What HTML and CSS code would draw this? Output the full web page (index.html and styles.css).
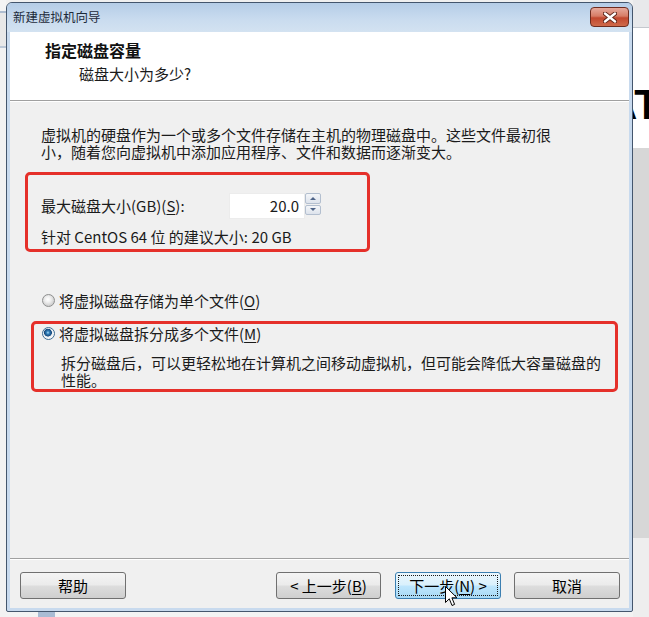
FILE: index.html
```html
<!DOCTYPE html>
<html lang="zh-CN">
<head>
    <title>新建虚拟机向导</title>
    <meta charset="utf-8">
    <link rel="stylesheet" href="styles.css">
</head>
<body>
<div class="desktop">
    <div class="side-left"></div>

    <div class="window-col">
        <div class="window">
            <div class="titlebar">
                <span class="title">新建虚拟机向导</span>
                <span class="close-btn">
                    <svg width="14" height="11" viewBox="0 0 14 11">
                        <path d="M2 1.5 L12 9.5 M12 1.5 L2 9.5" stroke="#5b2216" stroke-width="4.2" stroke-linecap="round"/>
                        <path d="M2 1.5 L12 9.5 M12 1.5 L2 9.5" stroke="#ffffff" stroke-width="2.4" stroke-linecap="round"/>
                    </svg>
                </span>
            </div>

            <div class="client">
                <div class="header">
                    <div class="header-title">指定磁盘容量</div>
                    <div class="header-sub">磁盘大小为多少?</div>
                </div>

                <div class="body">
                    <p class="intro">虚拟机的硬盘作为一个或多个文件存储在主机的物理磁盘中。这些文件最初很<br>小，随着您向虚拟机中添加应用程序、文件和数据而逐渐变大。</p>

                    <div class="mark mark-size">
                        <div class="size-row">
                            <span class="size-label">最大磁盘大小(GB)(<u>S</u>):</span>
                            <span class="spin-value">20.0</span>
                            <span class="spin-btns">
                                <span class="spin-btn"><i class="arrow-up"></i></span>
                                <span class="spin-btn"><i class="arrow-down"></i></span>
                            </span>
                        </div>
                        <div class="hint">针对 CentOS 64 位 的建议大小: 20 GB</div>
                    </div>

                    <div class="radio-row radio-single">
                        <span class="radio"></span>
                        <span>将虚拟磁盘存储为单个文件(<u>O</u>)</span>
                    </div>

                    <div class="mark mark-split">
                        <div class="radio-row">
                            <span class="radio radio-checked"></span>
                            <span>将虚拟磁盘拆分成多个文件(<u>M</u>)</span>
                        </div>
                        <p class="desc">拆分磁盘后，可以更轻松地在计算机之间移动虚拟机，但可能会降低大容量磁盘的<br>性能。</p>
                    </div>
                </div>

                <div class="footer">
                    <span class="button button-help">帮助</span>
                    <span class="button button-back">&lt; 上一步(<u>B</u>)</span>
                    <span class="button button-next">下一步(<u>N</u>) &gt;</span>
                    <span class="button button-cancel">取消</span>
                </div>
            </div>
        </div>
        <div class="bottom-strip"><span class="taskbar-bit"></span></div>
    </div>

    <div class="side-right">
        <div class="side-right-top"></div>
        <div class="side-right-white"><span class="big-text">AT</span></div>
        <div class="side-right-gray"></div>
        <div class="side-right-low"></div>
    </div>

    <svg class="cursor" width="14" height="22" viewBox="0 0 14 22">
        <path d="M0.5 0.5 L0.5 16.5 L4.3 12.8 L7 19.5 L9.6 18.4 L6.9 11.8 L12 11.8 Z" fill="#ffffff" stroke="#000000" stroke-width="1" stroke-linejoin="round"/>
    </svg>
</div>
</body>
</html>
```

FILE: styles.css
```css
*, *::before, *::after {
    margin: 0;
    padding: 0;
    box-sizing: border-box;
}

body {
    width: 649px;
    height: 617px;
    overflow: hidden;
    background-color: #f0f0f0;
    color: #1b1b1b;
    font-family: "Noto Sans CJK SC", "Noto Sans", sans-serif;
    font-size: 15px;
}

u {
    text-decoration: underline;
    text-underline-offset: 2px;
}

.desktop {
    position: relative;
    display: grid;
    grid-template-columns: 6px 627px 16px;
    height: 617px;
}

/* what is left of the desktop around the dialog */
.side-left {
    background: linear-gradient(to bottom,
        #f4f4f4 0, #f4f4f4 11px,
        #aebdd0 11px, #aebdd0 13px,
        #e8e8e8 13px, #e8e8e8 46px,
        #bcc8d7 46px, #bcc8d7 48px,
        #f2f2f2 48px);
}

.side-right {
    display: flex;
    flex-direction: column;
    overflow: hidden;
}

.side-right-top {
    height: 28px;
    background-color: #e8e9eb;
    border-bottom: 1px solid #c4c8ce;
}

.side-right-white {
    height: 120px;
    padding-top: 56px;
    background-color: #ffffff;
    white-space: nowrap;
}

.big-text {
    display: block;
    margin-left: -26px;
    color: #000000;
    font-family: "Liberation Sans", sans-serif;
    font-size: 42px;
    font-weight: 700;
    line-height: 1;
}

.side-right-gray {
    height: 390px;
    background-color: #d7d7d7;
}

.side-right-low {
    flex: 1;
    background-color: #eeeeee;
}

.window-col {
    display: flex;
    flex-direction: column;
}

.bottom-strip {
    flex: 1;
    background-color: #f3f3f3;
}

.taskbar-bit {
    display: block;
    width: 17px;
    height: 100%;
    margin-left: 32px;
    background-color: #a9bcd4;
}

/* dialog window */
.window {
    display: flex;
    flex-direction: column;
    height: 610px;
    margin-top: 2px;
    border: 1px solid #44566d;
    border-radius: 6px 6px 2px 2px;
    padding: 0 3px 3px;
    background-color: #c8daee;
}

.titlebar {
    display: flex;
    align-items: center;
    justify-content: space-between;
    height: 29px;
    margin: 0 -3px;
    padding: 0 3px 0 6px;
    border-radius: 5px 5px 0 0;
    background: linear-gradient(to bottom, #b5cde7, #cadcef 60%, #d3e2f1);
}

.title {
    color: #1d2a3a;
    font-size: 12.5px;
    line-height: 1;
}

.close-btn {
    display: flex;
    align-items: center;
    justify-content: center;
    align-self: flex-start;
    width: 39px;
    height: 20px;
    margin-top: 4px;
    border: 1px solid #6e2c1f;
    border-radius: 4px;
    background: linear-gradient(to bottom, #e7aa9c 0, #d77c66 45%, #c2482f 55%, #cf6a4a 100%);
}

.client {
    flex: 1;
    display: flex;
    flex-direction: column;
    background-color: #f0f0f0;
}

.header {
    height: 69px;
    padding: 8px 0 0 35px;
    border-bottom: 1px solid #a0a0a0;
    background-color: #ffffff;
}

.header-title {
    font-size: 16px;
    font-weight: 700;
    line-height: 20px;
    color: #111111;
}

.header-sub {
    margin-top: 5px;
    padding-left: 34px;
    line-height: 18px;
}

.body {
    flex: 1;
    padding: 24px 0 0 15px;
    border-top: 1px solid #ffffff;
}

.intro {
    margin-left: 16px;
    line-height: 17px;
    white-space: nowrap;
}

.mark {
    border: 3px solid #e5302a;
    border-radius: 5px;
}

.mark-size {
    width: 345px;
    height: 80px;
    margin-top: 12px;
    padding: 18px 0 0 13px;
}

.size-row {
    display: flex;
    align-items: flex-start;
    height: 26px;
}

.size-label {
    width: 188px;
    line-height: 26px;
}

.spin-value {
    width: 76px;
    height: 26px;
    padding-right: 5px;
    border: 1px solid #ececec;
    background-color: #ffffff;
    line-height: 24px;
    text-align: right;
}

.spin-btns {
    display: flex;
    flex-direction: column;
    gap: 1px;
    width: 16px;
}

.spin-btn {
    display: flex;
    align-items: center;
    justify-content: center;
    height: 10.5px;
    border: 1px solid #b3bfcf;
    border-radius: 2px;
    background: linear-gradient(to bottom, #f4f6f9, #dde3ec);
}

.arrow-up, .arrow-down {
    width: 0;
    height: 0;
    border-left: 3px solid transparent;
    border-right: 3px solid transparent;
}

.arrow-up {
    border-bottom: 3px solid #4f6488;
}

.arrow-down {
    border-top: 3px solid #4f6488;
}

.hint {
    margin-top: 9px;
    line-height: 17px;
}

.radio-row {
    display: flex;
    align-items: center;
    gap: 4px;
    height: 17px;
    line-height: 17px;
    white-space: nowrap;
}

.radio-single {
    margin-top: 40px;
    margin-left: 17px;
}

.radio {
    width: 13px;
    height: 13px;
    border: 1px solid #8e8f8f;
    border-radius: 50%;
    background: radial-gradient(circle at 45% 40%, #ffffff 0, #eeeeee 3px, #d2d2d2 6px);
}

.radio-checked {
    border-color: #3c6d95;
    background: radial-gradient(circle at 45% 42%, #a8dcf8 0, #2f7db8 1.6px, #16487b 3.6px, #e9eef3 4.2px, #f8f8f8 6px);
}

.mark-split {
    width: 587px;
    height: 71px;
    margin-top: 12px;
    margin-left: 6px;
    padding: 1px 0 0 8px;
}

.desc {
    margin-top: 12px;
    margin-left: 19px;
    line-height: 17px;
    white-space: nowrap;
}

.footer {
    display: flex;
    align-items: flex-start;
    height: 50px;
    padding: 13px 9px 0 10px;
    border-top: 1px solid #a0a0a0;
    box-shadow: inset 0 1px #ffffff;
}

.button {
    display: flex;
    align-items: center;
    justify-content: center;
    width: 106px;
    height: 27px;
    border: 1px solid #707070;
    border-radius: 3px;
    background: linear-gradient(to bottom, #f4f4f4 0, #ebebeb 48%, #dddddd 52%, #cfcfcf 100%);
    color: #000000;
    font-size: 15px;
    white-space: nowrap;
}

.button-back {
    width: 105px;
    margin-left: auto;
}

.button-next {
    margin-left: 14px;
    border-color: #3c7fb1;
    background: linear-gradient(to bottom, #eaf6fd 0, #d9f0fc 48%, #bee6fd 52%, #a7d9f5 100%);
    outline: 1px dotted #1a1a1a;
    outline-offset: -4px;
}

.button-cancel {
    margin-left: 13px;
}

/* mouse pointer over the "next" button */
.cursor {
    position: absolute;
    left: 445px;
    top: 586px;
}
```
